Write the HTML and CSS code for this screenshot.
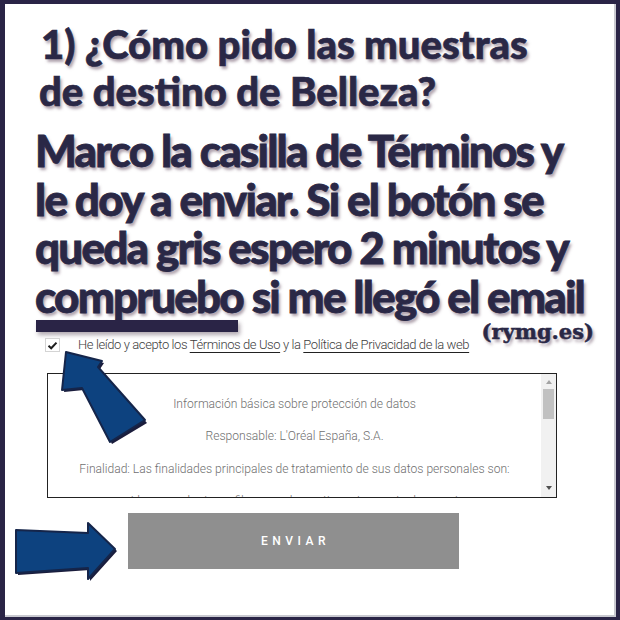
FILE: index.html
```html
<!DOCTYPE html>
<html lang="es">
<head>
<meta charset="utf-8">
<title>Muestras destino Belleza</title>
<link rel="stylesheet" href="styles.css">
</head>
<body>
<div class="frame">
  <div class="inner">
    <h1 class="title"><span class="t1">1) ¿Cómo pido las muestras</span><span class="t2">de destino de Belleza?</span></h1>
    <p class="lead"><span>Marco la casilla de Términos y</span><span>le doy a enviar. Si el botón se</span><span>queda gris espero 2 minutos y</span><span>compruebo si me llegó el email</span></p>
    <div class="sig"><div class="bar"></div><span class="site">(rymg.es)</span></div>
    <div class="consent">
      <span class="check"><svg width="11" height="9" viewBox="0 0 11 9"><path d="M1.5 4.8 L4.2 7.3 L9.5 1.6" fill="none" stroke="#1e1e1e" stroke-width="2"/></svg></span>
      <span class="ctext">He leído y acepto los <a class="lnk">Términos de Uso</a> y la <a class="lnk">Política de Privacidad de la web</a></span>
    </div>
    <div class="info">
      <div class="info-text">
        <p>Información básica sobre protección de datos</p>
        <p>Responsable: L'Oréal España, S.A.</p>
        <p>Finalidad: Las finalidades principales de tratamiento de sus datos personales son:</p>
        <p>- Llevar a cabo tu perfil personal y gestionar tu cuenta de usuario</p>
      </div>
      <div class="scroll">
        <span class="sup"></span>
        <span class="thumb"></span>
        <span class="sdown"></span>
      </div>
    </div>
    <div class="btn">ENVIAR</div>
  </div>
  <svg class="arrows" width="620" height="620" viewBox="0 0 620 620">
    <g stroke-linejoin="round">
      <polygon points="69,355 104,363 100,369 147,423 112,444 84,390 64,392" fill="#1b1d3c"/>
      <polygon points="66,352 102,361 98,367 145,420 110,442 82,388 62,390" fill="#0d427f" stroke="#15254a" stroke-width="2"/>
      <polygon points="18,532 90,535 90,525 117,551 90,581 90,570 18,575" fill="#1b1d3c"/>
      <polygon points="16,530 88,533 88,523 115,549 88,579 88,568 16,573" fill="#0d427f" stroke="#15254a" stroke-width="2"/>
    </g>
  </svg>
</div>
</body>
</html>
```
FILE: styles.css
```css
html, body {
  margin: 0;
  padding: 0;
  background: #ffffff;
}

.frame {
  position: relative;
  width: 620px;
  height: 620px;
  box-sizing: border-box;
  border-style: solid;
  border-color: #2a2446;
  border-width: 4px 4px 3px 5px;
  background: #ffffff;
  overflow: hidden;
}

.inner {
  height: 100%;
  box-sizing: border-box;
  border-right: 2px solid #c9c9d0;
  border-bottom: 2px solid #c9c9d0;
}

.title {
  margin: 0;
  padding: 17px 0 0 36px;
  font-family: Lato, "Noto Sans", sans-serif;
  font-weight: 900;
  font-size: 40px;
  line-height: 47px;
  color: #2a2846;
  -webkit-text-stroke: 0.7px #2a2846;
  text-shadow: 2px 3px 3px rgba(110, 85, 105, 0.55);
  white-space: nowrap;
}

.title span {
  display: block;
}

.title .t2 {
  margin-left: -2px;
}

.lead {
  margin: 11px 0 0 0;
  padding-left: 30px;
  font-family: Lato, "Noto Sans", sans-serif;
  font-weight: 900;
  font-size: 44px;
  line-height: 48.5px;
  letter-spacing: -1.8px;
  color: #2a2846;
  -webkit-text-stroke: 0.8px #2a2846;
  text-shadow: 2px 3px 3px rgba(110, 85, 105, 0.55);
  white-space: nowrap;
}

.lead span {
  display: block;
}

.sig {
  display: flex;
  justify-content: space-between;
  align-items: flex-start;
  height: 18px;
  margin-top: 0;
  padding: 0 20px 0 31px;
}

.bar {
  width: 202px;
  height: 12px;
  background: #2a2446;
  box-shadow: 2px 3px 4px rgba(60, 40, 60, 0.4);
}

.site {
  margin-top: 3px;
  font-family: "DejaVu Serif", "Liberation Serif", serif;
  font-weight: 700;
  font-size: 21px;
  line-height: 18px;
  color: #2a2846;
  -webkit-text-stroke: 0.5px #2a2846;
  text-shadow: 2px 3px 3px rgba(110, 85, 105, 0.55);
}

.consent {
  display: flex;
  align-items: center;
  height: 14px;
  margin-top: 0;
  padding-left: 40px;
}

.check {
  display: flex;
  align-items: center;
  justify-content: center;
  width: 15px;
  height: 14px;
  box-sizing: border-box;
  border: 1px solid #d4d4d4;
  background: #ffffff;
}

.ctext {
  margin-left: 18px;
  font-family: Roboto, "Liberation Sans", sans-serif;
  font-weight: 300;
  font-size: 13px;
  line-height: 14px;
  letter-spacing: -0.4px;
  color: #3c3c3c;
  white-space: nowrap;
}

.lnk {
  color: #3c3c3c;
  text-decoration: underline;
  text-decoration-color: #222222;
  text-underline-offset: 3px;
}

.info {
  display: flex;
  width: 510px;
  height: 125px;
  box-sizing: border-box;
  margin: 21px 0 0 42px;
  border: 1px solid #222222;
}

.info-text {
  flex: 1;
  overflow: hidden;
  padding-top: 22px;
  text-align: center;
  font-family: Roboto, "Liberation Sans", sans-serif;
  font-weight: 300;
  font-size: 12.1px;
  color: #6f6f6f;
}

.info-text p {
  margin: 0 0 16.3px 0;
  line-height: 16px;
  white-space: nowrap;
}

.scroll {
  display: flex;
  flex-direction: column;
  align-items: center;
  width: 15px;
  background: #f1f1f1;
}

.sup {
  margin-top: 6px;
  width: 0;
  height: 0;
  border-left: 3.5px solid transparent;
  border-right: 3.5px solid transparent;
  border-bottom: 4px solid #a3a3a3;
}

.thumb {
  margin-top: 5px;
  width: 11px;
  height: 30px;
  background: #c1c1c1;
}

.sdown {
  margin-top: auto;
  margin-bottom: 7px;
  width: 0;
  height: 0;
  border-left: 3.5px solid transparent;
  border-right: 3.5px solid transparent;
  border-top: 4px solid #505050;
}

.btn {
  display: flex;
  align-items: center;
  justify-content: center;
  width: 331px;
  height: 56px;
  margin: 15px 0 0 123px;
  padding-left: 4px;
  box-sizing: border-box;
  background: #8f8f8f;
  color: #ffffff;
  font-family: Roboto, "Liberation Sans", sans-serif;
  font-weight: 500;
  font-size: 12px;
  letter-spacing: 4.5px;
}

.arrows {
  position: absolute;
  left: -5px;
  top: -4px;
  pointer-events: none;
}
```
